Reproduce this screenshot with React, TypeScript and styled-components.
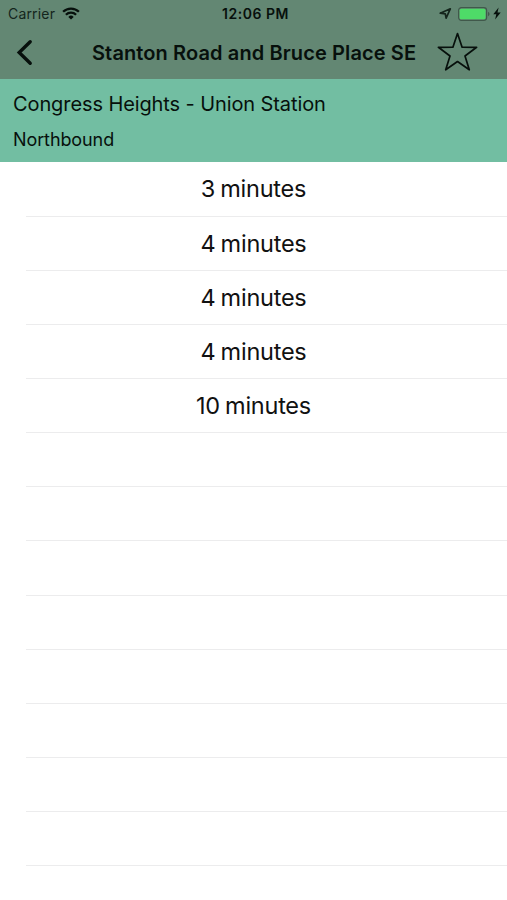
import React from "react";
import styled, { createGlobalStyle } from "styled-components";

const GlobalStyle = createGlobalStyle`
  * { box-sizing: border-box; }
  body {
    margin: 0;
    background: #fff;
    color: #07100c;
    font-family: Inter, "Liberation Sans", sans-serif;
  }
`;

const Screen = styled.main`
  width: 507px;
  height: 900px;
  overflow: hidden;
  display: flex;
  flex-direction: column;
  background: #fff;
`;

const TopArea = styled.header`
  height: 79px;
  flex: none;
  background: #638773;
`;

const StatusBar = styled.div`
  display: grid;
  grid-template-columns: 1fr auto 1fr;
  align-items: center;
  height: 27px;
  padding: 0 6px 0 8px;
`;

const StatusGroup = styled.div<{ $end?: boolean }>`
  display: flex;
  align-items: center;
  justify-content: ${(p) => (p.$end ? "flex-end" : "flex-start")};
`;

const Carrier = styled.span`
  font-size: 14px;
  line-height: 17px;
  letter-spacing: 0.18px;
  margin-right: 7px;
  color: #14251c;
`;

const Clock = styled.time`
  font-size: 14px;
  line-height: 17px;
  font-weight: 600;
  letter-spacing: 0.5px;
  padding: 0 0 1px 2px;
`;

const NavBar = styled.nav`
  display: flex;
  align-items: center;
  height: 50px;
  padding: 0 29px 0 16px;
`;

const IconButton = styled.button`
  display: flex;
  padding: 0;
  border: 0;
  background: none;
  color: inherit;
`;

const Title = styled.h1`
  margin: 0 20px 0 59px;
  padding-top: 1px;
  font-size: 20px;
  line-height: 26px;
  font-weight: 600;
  letter-spacing: 0.11px;
  white-space: nowrap;
  width: 325px;
`;

const RouteHeader = styled.section`
  height: 83px;
  flex: none;
  padding: 12px 13px 0;
  background: #72bea2;
`;

const RouteName = styled.h2`
  margin: 0;
  font-size: 20px;
  line-height: 26px;
  font-weight: 400;
  letter-spacing: -0.1px;
`;

const Direction = styled.p`
  margin: 12px 0 0;
  font-size: 18px;
  line-height: 22px;
  letter-spacing: -0.1px;
`;

const Arrivals = styled.ul`
  list-style: none;
  margin: 0;
  padding: 0.4px 0 0;
`;

const Arrival = styled.li`
  display: flex;
  align-items: center;
  justify-content: center;
  height: 54.17px;
  font-size: 23.5px;
  line-height: 30px;
  letter-spacing: -0.24px;
  word-spacing: -1.2px;
  color: #111;
  background: linear-gradient(#ececed, #ececed) 26px 100% / 100% 1px no-repeat;
`;

const IconGap = styled.span<{ $size: number }>`
  width: ${(p) => p.$size}px;
`;

const arrivals = ["3 minutes", "4 minutes", "4 minutes", "4 minutes", "10 minutes"];
const EMPTY_ROWS = 8;

const WifiIcon = () => (
  <svg width="18" height="13" viewBox="0 0 18 13" fill="none" stroke="#07100c" strokeWidth="2.3">
    <path d="M1.1 4.8a11.2 11.2 0 0 1 15.8 0" />
    <path d="M3.9 7.7a7.3 7.3 0 0 1 10.2 0" />
    <path d="M9 12.6 6.3 9.9a3.9 3.9 0 0 1 5.4 0z" fill="#07100c" stroke="none" />
  </svg>
);

const LocationIcon = () => (
  <svg width="13" height="13" viewBox="0 0 13 13" fill="none" stroke="#14251c" strokeWidth="1.7" strokeLinejoin="round">
    <path d="M1.2 6.2 11.3 1.8 7.1 11.2 6.3 6.9z" />
  </svg>
);

const BatteryIcon = () => (
  <svg width="32" height="14" viewBox="0 0 32 14">
    <rect x="0.6" y="0.6" width="28" height="12.8" rx="2.8" fill="none" stroke="#41584b" strokeWidth="1.2" />
    <rect x="1.7" y="1.7" width="25.8" height="10.6" rx="1.6" fill="#4edb68" />
    <path d="M30 4.7q1.6.8 1.6 2.3T30 9.3z" fill="#41584b" />
  </svg>
);

const BoltIcon = () => (
  <svg width="8" height="13" viewBox="0 0 8 13" fill="#07100c">
    <path d="M5.6.5.3 7.3h3L2.1 12.5 7.7 5.4H4.5z" />
  </svg>
);

const BackIcon = () => (
  <svg width="17" height="27" viewBox="0 0 17 27" fill="none" stroke="#07100c" strokeWidth="3.4" strokeLinecap="round" strokeLinejoin="miter">
    <path d="M14.2 2.7 3.2 13.5 14.2 24.3" />
  </svg>
);

const StarIcon = () => (
  <svg width="41" height="40" viewBox="0 0 41 40" fill="none" stroke="#07100c" strokeWidth="1.7" strokeLinejoin="round">
    <path d="M20.5 1.5 25.1 15.2 39.6 15.3 28 24 32.3 37.8 20.5 29.5 8.7 37.8 13 24 1.4 15.3 15.9 15.2z" />
  </svg>
);

export default function App() {
  return (
    <>
      <GlobalStyle />
      <Screen>
        <TopArea>
          <StatusBar>
            <StatusGroup>
              <Carrier>Carrier</Carrier>
              <WifiIcon />
            </StatusGroup>
            <Clock>12:06 PM</Clock>
            <StatusGroup $end>
              <LocationIcon />
              <IconGap $size={6} />
              <BatteryIcon />
              <IconGap $size={3} />
              <BoltIcon />
            </StatusGroup>
          </StatusBar>
          <NavBar>
            <IconButton aria-label="Back">
              <BackIcon />
            </IconButton>
            <Title>Stanton Road and Bruce Place SE</Title>
            <IconButton aria-label="Favorite">
              <StarIcon />
            </IconButton>
          </NavBar>
        </TopArea>
        <RouteHeader>
          <RouteName>Congress Heights - Union Station</RouteName>
          <Direction>Northbound</Direction>
        </RouteHeader>
        <Arrivals>
          {arrivals.map((time, i) => (
            <Arrival key={i}>{time}</Arrival>
          ))}
          {Array.from({ length: EMPTY_ROWS }, (_, i) => (
            <Arrival key={`empty-${i}`} />
          ))}
        </Arrivals>
      </Screen>
    </>
  );
}
